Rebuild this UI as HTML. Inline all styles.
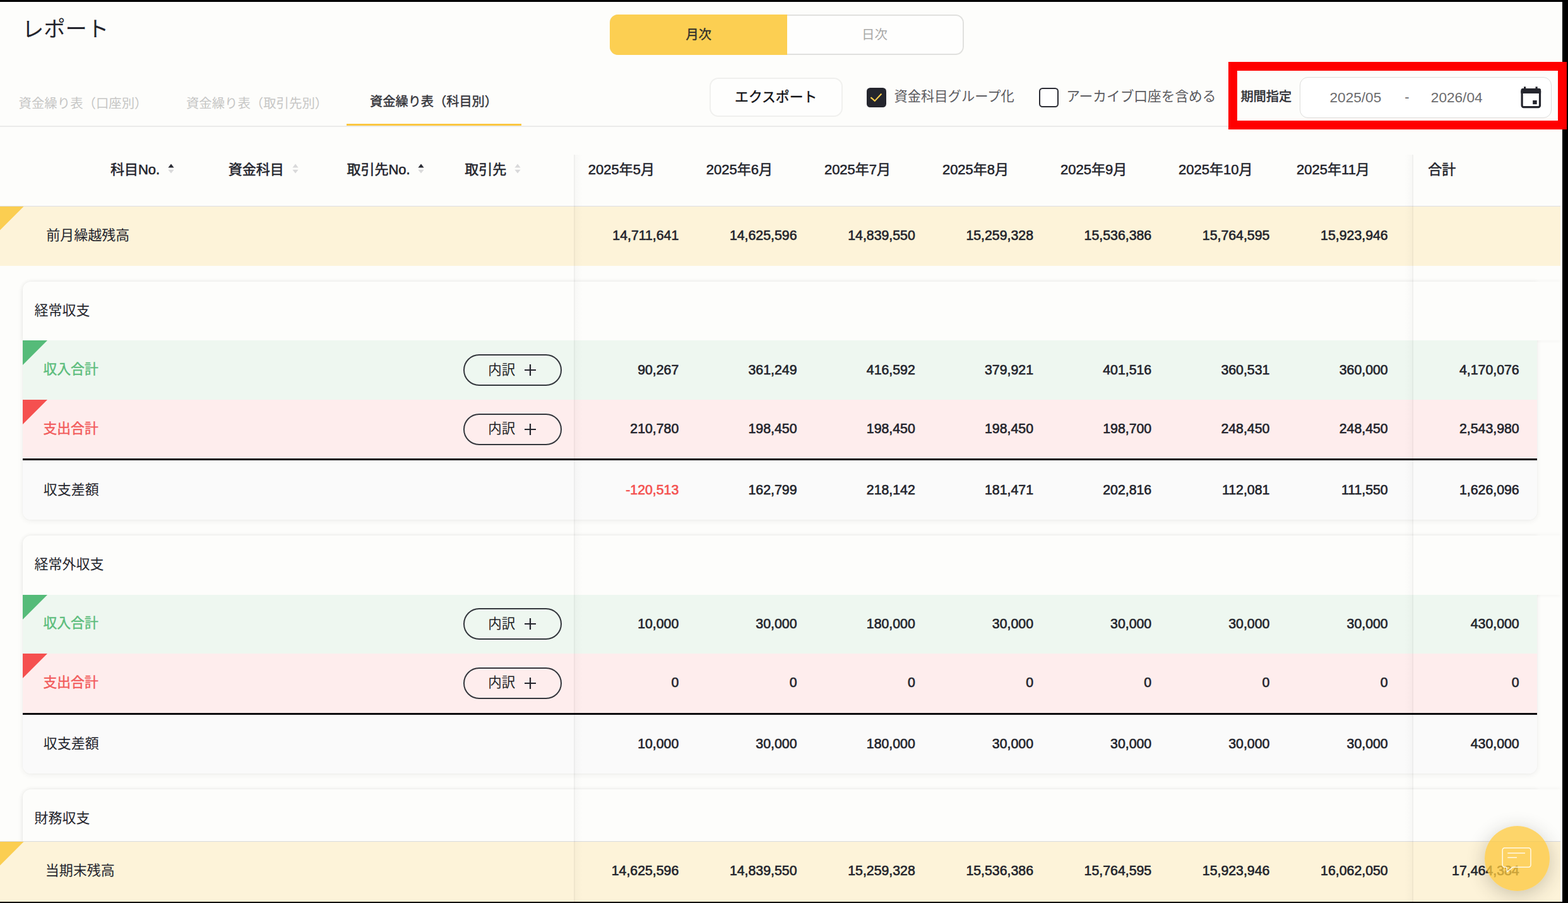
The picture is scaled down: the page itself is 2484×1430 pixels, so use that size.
<!DOCTYPE html>
<html lang="ja"><head><meta charset="utf-8"><title>レポート</title>
<style>
html,body{margin:0;padding:0}
body{width:2484px;height:1430px;position:relative;overflow:hidden;background:#fdfdfb;font-family:"Liberation Sans", "Noto Sans CJK JP", sans-serif;}
header,nav,section,aside{display:block;position:static;margin:0;padding:0;height:0}
div,svg{position:absolute;box-sizing:border-box;white-space:nowrap}
.L{overflow:visible}
.r{text-align:right}
.n{-webkit-text-stroke:0.65px currentColor}
.m{-webkit-text-stroke:0.55px currentColor}
.b{-webkit-text-stroke:0.45px currentColor}
</style></head><body>
<header>
<div class="L" style="left:35px;top:21px;height:50px;line-height:50px;font-size:34.3px;color:#23242c;">レポート</div>
<div style="left:966px;top:23px;width:561px;height:64px;border-radius:13px;border:2px solid #e0e0de;background:#fefefd;"></div>
<div style="left:966px;top:23px;width:280.5px;height:64px;border-radius:13px 0 0 13px;background:#fccf52;"></div>
<div class="L b" style="left:1086.4px;top:35.1px;height:40px;line-height:40px;font-size:20.3px;color:#33312b;">月次</div>
<div class="L" style="left:1365px;top:34.7px;height:40px;line-height:40px;font-size:20.5px;color:#a9a9a8;">日次</div>
</header>
<nav>
<div class="L" style="left:29.6px;top:144.4px;height:40px;line-height:40px;font-size:20.4px;color:#c6c6c5;">資金繰り表（口座別）</div>
<div class="L" style="left:294.9px;top:144.4px;height:40px;line-height:40px;font-size:20.4px;color:#c6c6c5;">資金繰り表（取引先別）</div>
<div class="L b" style="left:586.1px;top:141.2px;height:40px;line-height:40px;font-size:20.2px;color:#34343a;">資金繰り表（科目別）</div>
<div style="left:0px;top:199.4px;width:2472px;height:1.7px;background:#ebebea;"></div>
<div style="left:549px;top:196px;width:277px;height:3.3px;background:#fbc740;"></div>
</nav>
<section class="toolbar">
<div style="left:1124px;top:123px;width:211px;height:62px;border-radius:14px;border:2px solid #f0f0ee;background:#fefefd;"></div>
<div class="L b" style="left:1164.1px;top:133.9px;height:40px;line-height:40px;font-size:21.8px;color:#111114;">エクスポート</div>
<div style="left:1373px;top:138.6px;width:31.4px;height:31.4px;border-radius:5.5px;background:#24252d;"></div>
<svg style="left:1373px;top:138.6px" width="32" height="32" viewBox="0 0 32 32"><path d="M7.2 15.9 L12.8 20.9 L22.7 10.3" fill="none" stroke="#fbce4e" stroke-width="2.1" stroke-linecap="square"/></svg>
<div class="L" style="left:1416.4px;top:132.9px;height:40px;line-height:40px;font-size:21.3px;color:#5b5b5f;">資金科目グループ化</div>
<div style="left:1645.7px;top:138.6px;width:31.4px;height:31.4px;border-radius:5.5px;border:2px solid #2b2c34;background:#ffffff;"></div>
<div class="L" style="left:1689.2px;top:132.6px;height:40px;line-height:40px;font-size:21.7px;color:#5b5b5f;">アーカイブ口座を含める</div>
<div class="L b" style="left:1965.4px;top:133.1px;height:40px;line-height:40px;font-size:20.2px;color:#2a2a30;">期間指定</div>
<div style="left:2059px;top:121.5px;width:399px;height:65.2px;border-radius:13px;border:1.7px solid #dcdcdb;background:#ffffff;"></div>
<div class="" style="left:2067.4px;top:134.6px;width:160px;height:40px;line-height:40px;font-size:22.6px;color:#6c6c6e;text-align:center;">2025/05</div>
<div class="" style="left:2209px;top:133.5px;width:40px;height:40px;line-height:40px;font-size:22px;color:#6c6c6e;text-align:center;">-</div>
<div class="" style="left:2227.7px;top:134.6px;width:160px;height:40px;line-height:40px;font-size:22.6px;color:#6c6c6e;text-align:center;">2026/04</div>
<svg style="left:2409px;top:137px" width="33" height="35" viewBox="0 0 33 35"><rect x="2.1" y="4.6" width="28.4" height="28" rx="2.6" fill="none" stroke="#24252d" stroke-width="3.2"/><rect x="0.5" y="3" width="31.6" height="8" rx="2.8" fill="#24252d"/><rect x="0.5" y="7" width="31.6" height="4" fill="#24252d"/><rect x="5" y="0.3" width="3.2" height="4" fill="#24252d"/><rect x="23.5" y="0.3" width="3.2" height="4" fill="#24252d"/><rect x="19.2" y="21.9" width="6.5" height="6.2" fill="#24252d"/></svg>
</section>
<section class="table-head">
<div class="L m" style="left:174.9px;top:248.9px;height:40px;line-height:40px;font-size:22px;color:#23242c;">科目No.</div>
<svg style="left:265.2px;top:258px" width="12" height="18" viewBox="0 0 12 18"><path d="M1.4 7.4 L6 1.4 L10.6 7.4 Z" fill="#2a2b33"/><path d="M1.4 10.7 L6 16.5 L10.6 10.7 Z" fill="#d9d9da"/></svg>
<div class="L m" style="left:361.8px;top:248.8px;height:40px;line-height:40px;font-size:22px;color:#23242c;">資金科目</div>
<svg style="left:461.7px;top:258px" width="12" height="18" viewBox="0 0 12 18"><path d="M1.4 7.4 L6 1.4 L10.6 7.4 Z" fill="#d9d9da"/><path d="M1.4 10.7 L6 16.5 L10.6 10.7 Z" fill="#d9d9da"/></svg>
<div class="L m" style="left:549.4px;top:248.8px;height:40px;line-height:40px;font-size:22px;color:#23242c;">取引先No.</div>
<svg style="left:661px;top:258px" width="12" height="18" viewBox="0 0 12 18"><path d="M1.4 7.4 L6 1.4 L10.6 7.4 Z" fill="#2a2b33"/><path d="M1.4 10.7 L6 16.5 L10.6 10.7 Z" fill="#d9d9da"/></svg>
<div class="L m" style="left:736.3px;top:248.8px;height:40px;line-height:40px;font-size:22px;color:#23242c;">取引先</div>
<svg style="left:814px;top:258px" width="12" height="18" viewBox="0 0 12 18"><path d="M1.4 7.4 L6 1.4 L10.6 7.4 Z" fill="#d9d9da"/><path d="M1.4 10.7 L6 16.5 L10.6 10.7 Z" fill="#d9d9da"/></svg>
<div class="L m" style="left:931.8px;top:248.9px;height:40px;line-height:40px;font-size:22px;color:#23242c;">2025年5月</div>
<div class="L m" style="left:1118.8px;top:248.9px;height:40px;line-height:40px;font-size:22px;color:#23242c;">2025年6月</div>
<div class="L m" style="left:1305.9px;top:248.9px;height:40px;line-height:40px;font-size:22px;color:#23242c;">2025年7月</div>
<div class="L m" style="left:1492.9px;top:248.9px;height:40px;line-height:40px;font-size:22px;color:#23242c;">2025年8月</div>
<div class="L m" style="left:1680px;top:248.9px;height:40px;line-height:40px;font-size:22px;color:#23242c;">2025年9月</div>
<div class="L m" style="left:1867px;top:248.9px;height:40px;line-height:40px;font-size:22px;color:#23242c;">2025年10月</div>
<div class="L m" style="left:2054.1px;top:248.9px;height:40px;line-height:40px;font-size:22px;color:#23242c;">2025年11月</div>
<div class="L m" style="left:2262.3px;top:248.8px;height:40px;line-height:40px;font-size:22px;color:#23242c;">合計</div>
<div style="left:0px;top:326.1px;width:2472px;height:1.3px;background:#dddfe4;"></div>
</section>
<section class="row-carried">
<div style="left:0px;top:327.4px;width:2472px;height:93.2px;background:#fdf3d9;"></div>
<svg style="left:0px;top:327.4px" width="37.5" height="37.5" viewBox="0 0 37.5 37.5"><path d="M0 0 H37.5 L0 37.5 Z" fill="#fbce51"/></svg>
<div class="L" style="left:73.3px;top:353px;height:40px;line-height:40px;font-size:22px;color:#23242c;">前月繰越残高</div>
<div class="r n" style="right:1408.7px;top:353.1px;height:40px;line-height:40px;font-size:21.3px;color:#23242c;">14,711,641</div>
<div class="r n" style="right:1221.5px;top:353.1px;height:40px;line-height:40px;font-size:21.3px;color:#23242c;">14,625,596</div>
<div class="r n" style="right:1034.2px;top:353.1px;height:40px;line-height:40px;font-size:21.3px;color:#23242c;">14,839,550</div>
<div class="r n" style="right:847px;top:353.1px;height:40px;line-height:40px;font-size:21.3px;color:#23242c;">15,259,328</div>
<div class="r n" style="right:659.8px;top:353.1px;height:40px;line-height:40px;font-size:21.3px;color:#23242c;">15,536,386</div>
<div class="r n" style="right:472.6px;top:353.1px;height:40px;line-height:40px;font-size:21.3px;color:#23242c;">15,764,595</div>
<div class="r n" style="right:285.3px;top:353.1px;height:40px;line-height:40px;font-size:21.3px;color:#23242c;">15,923,946</div>
</section>
<section class="card">
<div style="left:36px;top:446px;width:2399px;height:376.6px;border-radius:13px 0 13px 13px;background:#fdfdfb;box-shadow:0 2px 9px rgba(60,60,50,0.075),0 0 3px rgba(60,60,50,0.04);"></div>
<div style="left:36px;top:446px;width:2436px;height:93.4px;border-radius:13px 0 0 0;background:#fdfdfb;box-shadow:0 0 7px rgba(60,60,50,0.06);"></div>
<div class="L" style="left:54.4px;top:471.6px;height:40px;line-height:40px;font-size:22px;color:#23242c;">経常収支</div>
<div style="left:36px;top:539.4px;width:2399px;height:93.7px;background:#eef7f0;"></div>
<svg style="left:36px;top:539.4px" width="39" height="39" viewBox="0 0 39 39"><path d="M0 0 H39 L0 39 Z" fill="#55bb79"/></svg>
<div class="L b" style="left:68.5px;top:564.7px;height:40px;line-height:40px;font-size:21.8px;color:#5cbd7c;">収入合計</div>
<div style="left:734px;top:561.1px;width:156px;height:50px;border-radius:25px;border:2px solid #34373d;"></div>
<div class="L" style="left:773.3px;top:565.5px;height:40px;line-height:40px;font-size:21.5px;color:#1d1e24;">内訳</div>
<svg style="left:830px;top:576.1px" width="20" height="20" viewBox="0 0 20 20"><path d="M10 1 V19 M1 10 H19" stroke="#24252d" stroke-width="2.2" fill="none"/></svg>
<div class="r n" style="right:1408.7px;top:565.5px;height:40px;line-height:40px;font-size:21.3px;color:#23242c;">90,267</div>
<div class="r n" style="right:1221.5px;top:565.5px;height:40px;line-height:40px;font-size:21.3px;color:#23242c;">361,249</div>
<div class="r n" style="right:1034.2px;top:565.5px;height:40px;line-height:40px;font-size:21.3px;color:#23242c;">416,592</div>
<div class="r n" style="right:847px;top:565.5px;height:40px;line-height:40px;font-size:21.3px;color:#23242c;">379,921</div>
<div class="r n" style="right:659.8px;top:565.5px;height:40px;line-height:40px;font-size:21.3px;color:#23242c;">401,516</div>
<div class="r n" style="right:472.6px;top:565.5px;height:40px;line-height:40px;font-size:21.3px;color:#23242c;">360,531</div>
<div class="r n" style="right:285.3px;top:565.5px;height:40px;line-height:40px;font-size:21.3px;color:#23242c;">360,000</div>
<div class="r n" style="right:77.3px;top:565.5px;height:40px;line-height:40px;font-size:21.3px;color:#23242c;">4,170,076</div>
<div style="left:36px;top:633px;width:2399px;height:93.4px;background:#feeded;"></div>
<svg style="left:36px;top:633px" width="39" height="39" viewBox="0 0 39 39"><path d="M0 0 H39 L0 39 Z" fill="#f5504f"/></svg>
<div class="L b" style="left:68.5px;top:658.9px;height:40px;line-height:40px;font-size:21.8px;color:#f25a5a;">支出合計</div>
<div style="left:734px;top:654.7px;width:156px;height:50px;border-radius:25px;border:2px solid #34373d;"></div>
<div class="L" style="left:773.3px;top:659.1px;height:40px;line-height:40px;font-size:21.5px;color:#1d1e24;">内訳</div>
<svg style="left:830px;top:669.7px" width="20" height="20" viewBox="0 0 20 20"><path d="M10 1 V19 M1 10 H19" stroke="#24252d" stroke-width="2.2" fill="none"/></svg>
<div class="r n" style="right:1408.7px;top:659.1px;height:40px;line-height:40px;font-size:21.3px;color:#23242c;">210,780</div>
<div class="r n" style="right:1221.5px;top:659.1px;height:40px;line-height:40px;font-size:21.3px;color:#23242c;">198,450</div>
<div class="r n" style="right:1034.2px;top:659.1px;height:40px;line-height:40px;font-size:21.3px;color:#23242c;">198,450</div>
<div class="r n" style="right:847px;top:659.1px;height:40px;line-height:40px;font-size:21.3px;color:#23242c;">198,450</div>
<div class="r n" style="right:659.8px;top:659.1px;height:40px;line-height:40px;font-size:21.3px;color:#23242c;">198,700</div>
<div class="r n" style="right:472.6px;top:659.1px;height:40px;line-height:40px;font-size:21.3px;color:#23242c;">248,450</div>
<div class="r n" style="right:285.3px;top:659.1px;height:40px;line-height:40px;font-size:21.3px;color:#23242c;">248,450</div>
<div class="r n" style="right:77.3px;top:659.1px;height:40px;line-height:40px;font-size:21.3px;color:#23242c;">2,543,980</div>
<div style="left:36px;top:726.3px;width:2399px;height:3.1px;background:#0c0c0e;"></div>
<div style="left:36px;top:729.4px;width:2399px;height:93.2px;border-radius:0 0 13px 13px;background:#fafafa;"></div>
<div class="L" style="left:68.7px;top:755.6px;height:40px;line-height:40px;font-size:22px;color:#23242c;">収支差額</div>
<div class="r n" style="right:1408.7px;top:755.5px;height:40px;line-height:40px;font-size:21.3px;color:#f4514f;">-120,513</div>
<div class="r n" style="right:1221.5px;top:755.5px;height:40px;line-height:40px;font-size:21.3px;color:#23242c;">162,799</div>
<div class="r n" style="right:1034.2px;top:755.5px;height:40px;line-height:40px;font-size:21.3px;color:#23242c;">218,142</div>
<div class="r n" style="right:847px;top:755.5px;height:40px;line-height:40px;font-size:21.3px;color:#23242c;">181,471</div>
<div class="r n" style="right:659.8px;top:755.5px;height:40px;line-height:40px;font-size:21.3px;color:#23242c;">202,816</div>
<div class="r n" style="right:472.6px;top:755.5px;height:40px;line-height:40px;font-size:21.3px;color:#23242c;">112,081</div>
<div class="r n" style="right:285.3px;top:755.5px;height:40px;line-height:40px;font-size:21.3px;color:#23242c;">111,550</div>
<div class="r n" style="right:77.3px;top:755.5px;height:40px;line-height:40px;font-size:21.3px;color:#23242c;">1,626,096</div>
</section>
<section class="card">
<div style="left:36px;top:848.2px;width:2399px;height:376.6px;border-radius:13px 0 13px 13px;background:#fdfdfb;box-shadow:0 2px 9px rgba(60,60,50,0.075),0 0 3px rgba(60,60,50,0.04);"></div>
<div style="left:36px;top:848.2px;width:2436px;height:93.4px;border-radius:13px 0 0 0;background:#fdfdfb;box-shadow:0 0 7px rgba(60,60,50,0.06);"></div>
<div class="L" style="left:54.4px;top:873.8px;height:40px;line-height:40px;font-size:22px;color:#23242c;">経常外収支</div>
<div style="left:36px;top:941.6px;width:2399px;height:93.7px;background:#eef7f0;"></div>
<svg style="left:36px;top:941.6px" width="39" height="39" viewBox="0 0 39 39"><path d="M0 0 H39 L0 39 Z" fill="#55bb79"/></svg>
<div class="L b" style="left:68.5px;top:966.9px;height:40px;line-height:40px;font-size:21.8px;color:#5cbd7c;">収入合計</div>
<div style="left:734px;top:963.3px;width:156px;height:50px;border-radius:25px;border:2px solid #34373d;"></div>
<div class="L" style="left:773.3px;top:967.7px;height:40px;line-height:40px;font-size:21.5px;color:#1d1e24;">内訳</div>
<svg style="left:830px;top:978.3px" width="20" height="20" viewBox="0 0 20 20"><path d="M10 1 V19 M1 10 H19" stroke="#24252d" stroke-width="2.2" fill="none"/></svg>
<div class="r n" style="right:1408.7px;top:967.7px;height:40px;line-height:40px;font-size:21.3px;color:#23242c;">10,000</div>
<div class="r n" style="right:1221.5px;top:967.7px;height:40px;line-height:40px;font-size:21.3px;color:#23242c;">30,000</div>
<div class="r n" style="right:1034.2px;top:967.7px;height:40px;line-height:40px;font-size:21.3px;color:#23242c;">180,000</div>
<div class="r n" style="right:847px;top:967.7px;height:40px;line-height:40px;font-size:21.3px;color:#23242c;">30,000</div>
<div class="r n" style="right:659.8px;top:967.7px;height:40px;line-height:40px;font-size:21.3px;color:#23242c;">30,000</div>
<div class="r n" style="right:472.6px;top:967.7px;height:40px;line-height:40px;font-size:21.3px;color:#23242c;">30,000</div>
<div class="r n" style="right:285.3px;top:967.7px;height:40px;line-height:40px;font-size:21.3px;color:#23242c;">30,000</div>
<div class="r n" style="right:77.3px;top:967.7px;height:40px;line-height:40px;font-size:21.3px;color:#23242c;">430,000</div>
<div style="left:36px;top:1035.2px;width:2399px;height:93.4px;background:#feeded;"></div>
<svg style="left:36px;top:1035.2px" width="39" height="39" viewBox="0 0 39 39"><path d="M0 0 H39 L0 39 Z" fill="#f5504f"/></svg>
<div class="L b" style="left:68.5px;top:1061.1px;height:40px;line-height:40px;font-size:21.8px;color:#f25a5a;">支出合計</div>
<div style="left:734px;top:1056.9px;width:156px;height:50px;border-radius:25px;border:2px solid #34373d;"></div>
<div class="L" style="left:773.3px;top:1061.3px;height:40px;line-height:40px;font-size:21.5px;color:#1d1e24;">内訳</div>
<svg style="left:830px;top:1071.9px" width="20" height="20" viewBox="0 0 20 20"><path d="M10 1 V19 M1 10 H19" stroke="#24252d" stroke-width="2.2" fill="none"/></svg>
<div class="r n" style="right:1408.7px;top:1061.3px;height:40px;line-height:40px;font-size:21.3px;color:#23242c;">0</div>
<div class="r n" style="right:1221.5px;top:1061.3px;height:40px;line-height:40px;font-size:21.3px;color:#23242c;">0</div>
<div class="r n" style="right:1034.2px;top:1061.3px;height:40px;line-height:40px;font-size:21.3px;color:#23242c;">0</div>
<div class="r n" style="right:847px;top:1061.3px;height:40px;line-height:40px;font-size:21.3px;color:#23242c;">0</div>
<div class="r n" style="right:659.8px;top:1061.3px;height:40px;line-height:40px;font-size:21.3px;color:#23242c;">0</div>
<div class="r n" style="right:472.6px;top:1061.3px;height:40px;line-height:40px;font-size:21.3px;color:#23242c;">0</div>
<div class="r n" style="right:285.3px;top:1061.3px;height:40px;line-height:40px;font-size:21.3px;color:#23242c;">0</div>
<div class="r n" style="right:77.3px;top:1061.3px;height:40px;line-height:40px;font-size:21.3px;color:#23242c;">0</div>
<div style="left:36px;top:1128.5px;width:2399px;height:3.1px;background:#0c0c0e;"></div>
<div style="left:36px;top:1131.6px;width:2399px;height:93.2px;border-radius:0 0 13px 13px;background:#fafafa;"></div>
<div class="L" style="left:68.7px;top:1157.8px;height:40px;line-height:40px;font-size:22px;color:#23242c;">収支差額</div>
<div class="r n" style="right:1408.7px;top:1157.7px;height:40px;line-height:40px;font-size:21.3px;color:#23242c;">10,000</div>
<div class="r n" style="right:1221.5px;top:1157.7px;height:40px;line-height:40px;font-size:21.3px;color:#23242c;">30,000</div>
<div class="r n" style="right:1034.2px;top:1157.7px;height:40px;line-height:40px;font-size:21.3px;color:#23242c;">180,000</div>
<div class="r n" style="right:847px;top:1157.7px;height:40px;line-height:40px;font-size:21.3px;color:#23242c;">30,000</div>
<div class="r n" style="right:659.8px;top:1157.7px;height:40px;line-height:40px;font-size:21.3px;color:#23242c;">30,000</div>
<div class="r n" style="right:472.6px;top:1157.7px;height:40px;line-height:40px;font-size:21.3px;color:#23242c;">30,000</div>
<div class="r n" style="right:285.3px;top:1157.7px;height:40px;line-height:40px;font-size:21.3px;color:#23242c;">30,000</div>
<div class="r n" style="right:77.3px;top:1157.7px;height:40px;line-height:40px;font-size:21.3px;color:#23242c;">430,000</div>
</section>
<section class="card">
<div style="left:36px;top:1250.4px;width:2399px;height:378px;border-radius:13px 0 13px 13px;background:#fdfdfb;box-shadow:0 2px 9px rgba(60,60,50,0.075),0 0 3px rgba(60,60,50,0.04);"></div>
<div style="left:36px;top:1250.4px;width:2436px;height:94.3px;border-radius:13px 0 0 0;background:#fdfdfb;box-shadow:0 0 7px rgba(60,60,50,0.06);"></div>
<div class="L" style="left:54.6px;top:1275.8px;height:40px;line-height:40px;font-size:22px;color:#23242c;">財務収支</div>
</section>
<section class="row-closing">
<div style="left:0px;top:1331.5px;width:2472px;height:1.7px;background:#d9dadd;"></div>
<div style="left:0px;top:1333.2px;width:2472px;height:96.8px;background:#fdf3d9;"></div>
<svg style="left:0px;top:1333.2px" width="37.5" height="37.5" viewBox="0 0 37.5 37.5"><path d="M0 0 H37.5 L0 37.5 Z" fill="#fbce51"/></svg>
<div class="L" style="left:71.7px;top:1358.9px;height:40px;line-height:40px;font-size:22px;color:#23242c;">当期末残高</div>
<div class="r n" style="right:1408.7px;top:1359.1px;height:40px;line-height:40px;font-size:21.3px;color:#23242c;">14,625,596</div>
<div class="r n" style="right:1221.5px;top:1359.1px;height:40px;line-height:40px;font-size:21.3px;color:#23242c;">14,839,550</div>
<div class="r n" style="right:1034.2px;top:1359.1px;height:40px;line-height:40px;font-size:21.3px;color:#23242c;">15,259,328</div>
<div class="r n" style="right:847px;top:1359.1px;height:40px;line-height:40px;font-size:21.3px;color:#23242c;">15,536,386</div>
<div class="r n" style="right:659.8px;top:1359.1px;height:40px;line-height:40px;font-size:21.3px;color:#23242c;">15,764,595</div>
<div class="r n" style="right:472.6px;top:1359.1px;height:40px;line-height:40px;font-size:21.3px;color:#23242c;">15,923,946</div>
<div class="r n" style="right:285.3px;top:1359.1px;height:40px;line-height:40px;font-size:21.3px;color:#23242c;">16,062,050</div>
<div class="r n" style="right:77.3px;top:1359.1px;height:40px;line-height:40px;font-size:21.3px;color:#23242c;">17,464,384</div>
</section>
<aside class="overlays">
<div style="left:909px;top:245px;width:1.5px;height:1185px;background:rgba(0,0,0,0.05);"></div>
<div style="left:910.5px;top:245px;width:12px;height:1185px;background:linear-gradient(90deg,rgba(0,0,0,0.02),rgba(0,0,0,0));"></div>
<div style="left:2237px;top:245px;width:1.5px;height:1185px;background:rgba(0,0,0,0.05);"></div>
<div style="left:2225px;top:245px;width:12px;height:1185px;background:linear-gradient(270deg,rgba(0,0,0,0.02),rgba(0,0,0,0));"></div>
<div style="left:1946px;top:98px;width:536px;height:107px;border:14px solid #ff0000;"></div>
<div style="left:2352px;top:1308px;width:103px;height:103px;border-radius:52px;background:rgba(253,200,62,0.77);box-shadow:0 6px 30px rgba(40,40,30,0.24);"></div>
<svg style="left:2376px;top:1338px" width="54" height="48" viewBox="0 0 54 48"><path d="M10.5 35.2 H7.6 a3.4 3.4 0 0 1 -3.4 -3.4 V8.2 a3.4 3.4 0 0 1 3.4 -3.4 H45.6 a3.4 3.4 0 0 1 3.4 3.4 V31.8 a3.4 3.4 0 0 1 -3.4 3.4 H20.6 L11.6 42.6 L10.5 35.2" fill="none" stroke="#fffdf3" stroke-opacity="0.92" stroke-width="1.5" stroke-linejoin="round"/><path d="M12.3 12.9 H40 M12.3 20 H27" fill="none" stroke="#fffdf3" stroke-opacity="0.92" stroke-width="1.5"/></svg>
<div style="left:0px;top:0px;width:2484px;height:2.8px;background:#000;"></div>
<div style="left:2475px;top:0px;width:9px;height:1430px;background:#000;"></div>
<div style="left:0px;top:1427.5px;width:2484px;height:2.5px;background:#000;"></div>
<div style="left:2468px;top:98px;width:14px;height:107px;background:#ff0000;"></div>
</aside>
</body></html>
